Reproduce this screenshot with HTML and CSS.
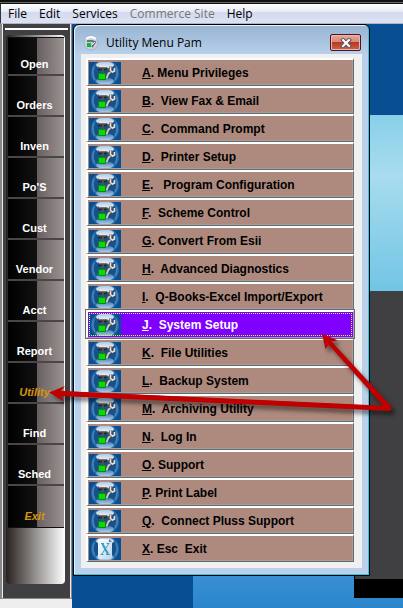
FILE: index.html
```
<!DOCTYPE html>
<html lang="en">
<head>
<meta charset="utf-8">
<title>Utility Menu Pam</title>
<link rel="stylesheet" href="styles.css">
</head>
<body>
<svg class="defs" width="0" height="0" aria-hidden="true">
  <defs>
    <linearGradient id="cap" x1="0" y1="0" x2="0" y2="1">
      <stop offset="0" stop-color="#a8c6e4"/><stop offset="1" stop-color="#f2f7fb"/>
    </linearGradient>
    <linearGradient id="base" x1="0" y1="0" x2="0" y2="1">
      <stop offset="0" stop-color="#3c78b0"/><stop offset="1" stop-color="#b4d2ec"/>
    </linearGradient>
    <linearGradient id="page" x1="0" y1="0" x2="1" y2="1">
      <stop offset="0" stop-color="#fff"/><stop offset="1" stop-color="#bcd4e8"/>
    </linearGradient>
    <symbol id="orb" viewBox="0 0 32 22">
      <rect width="32" height="22" fill="#084e92"/>
      <ellipse cx="16" cy="11" rx="14" ry="13.500" fill="#2a68a6"/>
      <ellipse cx="16" cy="11" rx="11" ry="12" fill="#14528e"/>
      <path d="M5 5Q2 11 6 18M27 5Q30 11 26 18" fill="none" stroke="#4c80b4" stroke-width="1.500"/>
      <ellipse cx="16" cy="3" rx="9" ry="3.500" fill="url(#cap)"/>
      <ellipse cx="16" cy="19" rx="9" ry="3.500" fill="url(#base)"/>
    </symbol>
    <symbol id="tools" viewBox="0 0 32 22">
      <path d="M9 4h9l3 2v3h-3l-1-1h-2v3h-3V8H9z" fill="#4a5258"/>
      <path d="M9.500 4.500h8.500l2 1.500" fill="none" stroke="#e2e6ea" stroke-width="1.500"/>
      <path d="M9 7.500h4M15 7.500h3" stroke="#20262c" stroke-width="1.500"/>
      <path d="M17.500 16.500l2-5 3-2" fill="none" stroke="#39434c" stroke-width="3.500"/>
      <path d="M17.500 16.500l2-5 3-2" fill="none" stroke="#c4cad0" stroke-width="2"/>
      <path d="M21.500 4.500v4l2 1.500 2-1V6" fill="none" stroke="#4a545e" stroke-width="3"/>
      <path d="M21.500 4.500v4l2 1.500 2-1V6" fill="none" stroke="#e0e4e8" stroke-width="1.500"/>
      <rect x="9" y="11" width="8" height="7" fill="#078a14"/>
      <rect x="10" y="12" width="6" height="5" fill="#0cd60c"/>
    </symbol>
    <symbol id="sheet" viewBox="0 0 32 22">
      <path d="M9 3q0-2 2-2h9l3 3v15q0 2-2 2H11q-2 0-2-2z" fill="url(#page)"/>
      <path d="M20 1v3h3z" fill="#5f7f9c"/>
      <path d="M12 5.500h3M17.500 5.500h3M11.500 16.500h3M17 16.500h4M19.500 6l-6.500 10" fill="none" stroke="#3c9cd0" stroke-width="1"/>
      <path d="M13.500 6l5.500 10" fill="none" stroke="#3298d0" stroke-width="2"/>
    </symbol>
  </defs>
</svg>
<div class="screen">
  <div class="edge"></div>
  <nav class="menubar">
    <button>File</button><button>Edit</button><button>Services</button><button disabled>Commerce Site</button><button>Help</button>
  </nav>
  <div class="workspace">
    <aside class="sidebar">
      <div class="rail">
        <div class="keys">
          <button>Open</button>
          <button>Orders</button>
          <button>Inven</button>
          <button>Po'S</button>
          <button>Cust</button>
          <button>Vendor</button>
          <button>Acct</button>
          <button>Report</button>
          <button class="hot">Utility</button>
          <button>Find</button>
          <button>Sched</button>
          <button class="hot">Exit</button>
        </div>
      </div>
    </aside>
    <main class="desktop">
      <div class="photo"></div>
      <div class="panel"></div>
      <section class="window">
        <header class="titlebar">
          <svg class="appicon" viewBox="0 0 16 16" aria-hidden="true">
            <circle cx="8" cy="8" r="7" fill="#c3d2e0" stroke="#a3b5c6"/>
            <path d="M3 4q5-4 10 0" fill="none" stroke="#fff" stroke-width="2"/>
            <path d="M4 6h5l3 1-3 5" fill="none" stroke="#66727c" stroke-width="2"/>
            <path d="M9 10l3-3" stroke="#e4e8ea" stroke-width="1"/>
            <rect x="4" y="8" width="4" height="4" fill="#12b82c"/>
          </svg>
          <h1>Utility Menu Pam</h1>
          <button class="close" aria-label="Close">
            <svg viewBox="0 0 12 10" aria-hidden="true">
              <path d="M3 2l6 6M9 2l-6 6" stroke="#5a5668" stroke-width="4" stroke-linecap="square"/>
              <path d="M3 2l6 6M9 2l-6 6" stroke="#fff" stroke-width="2" stroke-linecap="square"/>
            </svg>
          </button>
        </header>
        <div class="list">
          <button><svg class="ico"><use href="#orb"/><use href="#tools"/></svg><span><u>A</u>. Menu Privileges</span></button>
          <button><svg class="ico"><use href="#orb"/><use href="#tools"/></svg><span><u>B</u>.  View Fax &amp; Email</span></button>
          <button><svg class="ico"><use href="#orb"/><use href="#tools"/></svg><span><u>C</u>.  Command Prompt</span></button>
          <button><svg class="ico"><use href="#orb"/><use href="#tools"/></svg><span><u>D</u>.  Printer Setup</span></button>
          <button><svg class="ico"><use href="#orb"/><use href="#tools"/></svg><span><u>E</u>.   Program Configuration</span></button>
          <button><svg class="ico"><use href="#orb"/><use href="#tools"/></svg><span><u>F</u>.  Scheme Control</span></button>
          <button><svg class="ico"><use href="#orb"/><use href="#tools"/></svg><span><u>G</u>. Convert From Esii</span></button>
          <button><svg class="ico"><use href="#orb"/><use href="#tools"/></svg><span><u>H</u>.  Advanced Diagnostics</span></button>
          <button><svg class="ico"><use href="#orb"/><use href="#tools"/></svg><span><u>I</u>.  Q-Books-Excel Import/Export</span></button>
          <button class="selected"><svg class="ico"><use href="#orb"/><use href="#tools"/></svg><span><u>J</u>.  System Setup</span></button>
          <button><svg class="ico"><use href="#orb"/><use href="#tools"/></svg><span><u>K</u>.  File Utilities</span></button>
          <button><svg class="ico"><use href="#orb"/><use href="#tools"/></svg><span><u>L</u>.  Backup System</span></button>
          <button><svg class="ico"><use href="#orb"/><use href="#tools"/></svg><span><u>M</u>.  Archiving Utility</span></button>
          <button><svg class="ico"><use href="#orb"/><use href="#tools"/></svg><span><u>N</u>.  Log In</span></button>
          <button><svg class="ico"><use href="#orb"/><use href="#tools"/></svg><span><u>O</u>. Support</span></button>
          <button><svg class="ico"><use href="#orb"/><use href="#tools"/></svg><span><u>P</u>. Print Label</span></button>
          <button><svg class="ico"><use href="#orb"/><use href="#tools"/></svg><span><u>Q</u>.  Connect Pluss Support</span></button>
          <button><svg class="ico"><use href="#orb"/><use href="#sheet"/></svg><span><u>X</u>. Esc  Exit</span></button>
        </div>
      </section>
    </main>
  </div>
  <svg class="arrows" viewBox="0 0 403 608" aria-hidden="true">
    <g fill="#c00000">
      <path d="M49 392.500L65 386l-4 5L390 406.500v3.500L61 395.500l3 6z"/>
      <path d="M60 391L390 406v5L60 396z"/>
      <path d="M322 333.500l16 7-6.500 1L391 406l-4 4L328.500 344.500l-3 5z"/>
      <circle cx="388.500" cy="408" r="2.800"/>
    </g>
  </svg>
</div>
</body>
</html>
```
FILE: styles.css
```
* { box-sizing: border-box; }
body {
  margin: 0;
  font-family: "Liberation Sans", Arial, sans-serif;
  font-size: 12px;
}
button {
  margin: 0;
  padding: 0;
  border: 0;
  background: none;
  font: inherit;
  color: inherit;
}
.defs { position: absolute; }
.screen {
  position: relative;
  display: flex;
  flex-direction: column;
  min-height: 100vh;
  overflow: hidden;
}
.edge {
  height: 4px;
  background: linear-gradient(#111 0 2px, #666 2px 3px, #111 3px);
}
.menubar {
  display: flex;
  gap: 12px;
  height: 20px;
  padding-left: 7px;
  border-left: 1px solid #333;
  border-bottom: 1px solid #b0b4c8;
  background: linear-gradient(#fff, #e8ecf6 40%, #d4daee 45%, #dde2f3);
  font-family: "Open Sans", sans-serif;
  color: #000;
}
.menubar button:disabled { color: #777; }
.workspace {
  display: flex;
  flex: 1;
  align-items: stretch;
}
.sidebar {
  width: 72px;
  margin-bottom: 9px;
  padding: 11px 6px 14px 4px;
  border: 1px solid #888;
  border-width: 0 1px 1px 2px;
  background: linear-gradient(#fff, #fff) 3px 4px / 63px 2px no-repeat, #404042;
  box-shadow: inset -1px 0 #eee, inset 1px 0 #eee, 0 9px #eee;
}
.rail {
  height: 100%;
  padding: 2px 1px 0 2px;
  border-radius: 4px;
  background: linear-gradient(90deg, #28221e, #fff);
}
.keys {
  border: 1px solid #111;
  border-width: 1px 0 1px 0;
  background: linear-gradient(90deg, #000 0, #111 52%, #686060 52%, #9b9292);
  font-size: 11px;
  font-weight: bold;
  color: #fff;
}
.keys button {
  display: block;
  width: 100%;
  height: 41px;
  padding: 18px 3px 0 0;
  border-bottom: 2px solid #4a4646;
}
.keys button:first-child { height: 38px; padding-top: 15px; }
.keys button:last-child { border-bottom: 0; }
.keys .hot { color: #d8940c; font-style: italic; }
.desktop {
  position: relative;
  flex: 1;
  padding-right: 33px;
  background: #084e92;
}
.photo {
  position: absolute;
  top: 91px;
  bottom: 0;
  left: 121px;
  right: 0;
  background: linear-gradient(#88d0e8, #a8dcee 60px, #70c4e4 180px, #3b8fd2 460px, #2a86cc);
}
.panel {
  position: absolute;
  top: 267px;
  bottom: 10px;
  left: 282px;
  right: 0;
  border: solid #000;
  border-width: 0 0 19px 1px;
  background: #404042;
}
.window {
  position: relative;
  margin-left: 1px;
  padding: 0 7px 7px;
  border: 1px solid #000;
  border-radius: 6px 6px 0 0;
  background: linear-gradient(#98b4d2, #b9d1ea 30px);
  box-shadow: inset -1px -1px #30c8e8, inset 1px 1px #e8f2fa;
}
.titlebar {
  display: flex;
  align-items: center;
  height: 29px;
  padding: 6px 1px 0 2px;
}
.appicon { width: 16px; height: 16px; }
h1 {
  flex: 1;
  margin: 0 0 0 7px;
  font: 12px "Open Sans", sans-serif;
}
.close {
  display: flex;
  align-items: center;
  justify-content: center;
  width: 31px;
  height: 17px;
  border: 1px solid #4c1420;
  border-radius: 2px;
  background: linear-gradient(#e8a898, #d88878 46%, #b83820 50%, #cc6450);
  box-shadow: inset 0 0 0 1px #eab8ac;
}
.close svg { width: 12px; height: 10px; }
.list {
  display: grid;
  grid-auto-rows: 28px;
  padding: 4px 8px 6px 5px;
  background: #f0f0f0;
}
.list button {
  display: flex;
  align-items: center;
  gap: 21px;
  border: solid;
  border-width: 2px 1px 1px 2px;
  border-color: #fff #696969 #696969 #fff;
  background: #ae8a7e;
  box-shadow: inset -1px -1px #a0a0a0;
  font-weight: bold;
  text-align: left;
  white-space: pre;
}
.ico { width: 32px; height: 22px; margin-left: 1px; }
.list .selected {
  position: relative;
  border-color: #fff #a0a0a0 #a0a0a0 #fff;
  background: #8000ff;
  box-shadow: 0 0 0 1px #696969;
  color: #fff;
}
.selected::after {
  content: "";
  position: absolute;
  inset: 1px;
  border: 1px dotted #d8ff60;
}
.arrows {
  position: absolute;
  top: 0;
  left: 0;
  width: 403px;
  height: 608px;
  filter: drop-shadow(3px 4px 2px rgba(0, 0, 0, 0.5));
  pointer-events: none;
}
```
